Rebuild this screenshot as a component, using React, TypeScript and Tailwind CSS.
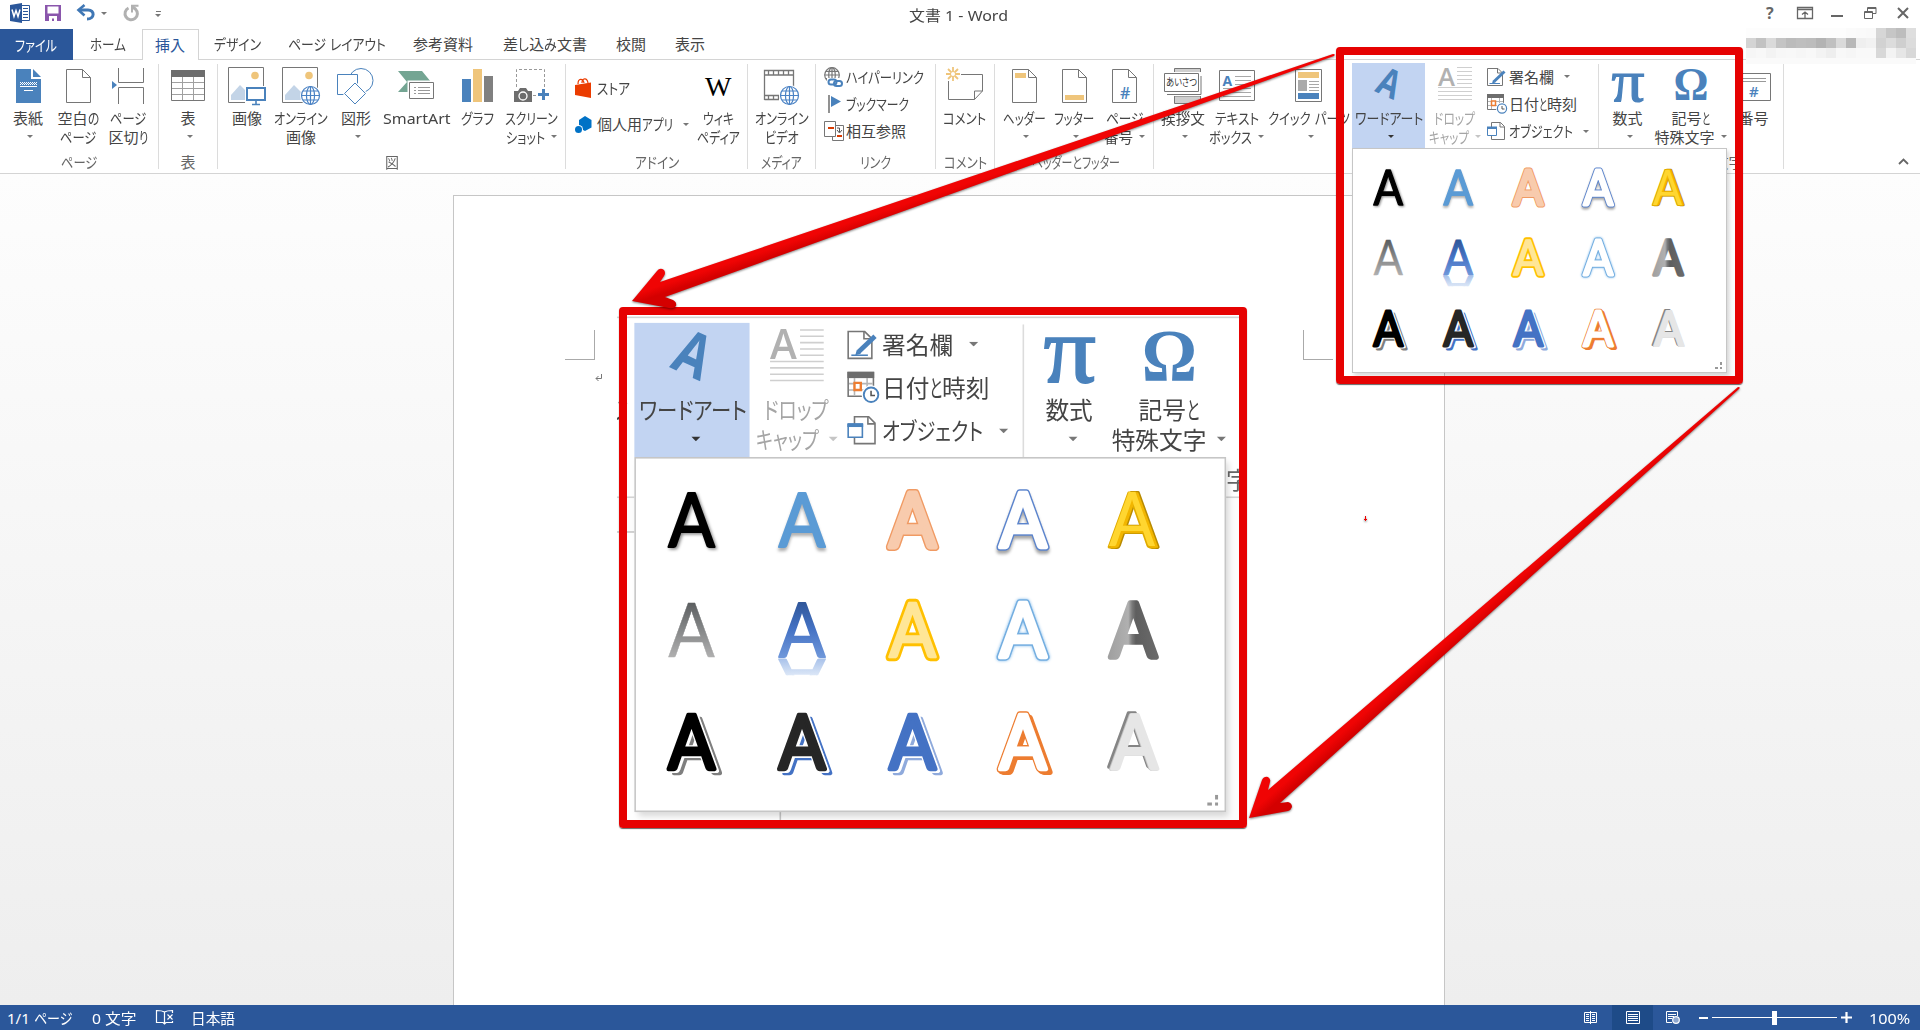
import React, { useLayoutEffect, useRef, ReactNode } from "react";

/* Text fitted to a given width: kana runs are condensed, kanji keep their width. */
function Fit({ t, w, className = "" }: { t: string; w: number; className?: string }) {
  const ref = useRef<HTMLSpanElement>(null);
  const runs = t.match(/[\u3041-\u30ff]+|[^\u3041-\u30ff]+/g) || [];
  useLayoutEffect(() => {
    const outer = Array.from(ref.current!.children) as HTMLElement[];
    outer.forEach((o) => (o.style.width = "auto"));
    const ws = outer.map((o) => (o.firstElementChild as HTMLElement).offsetWidth);
    const kana = runs.map((r) => /[\u3041-\u30ff]/.test(r));
    const k = ws.reduce((a, v, i) => a + (kana[i] ? v : 0), 0);
    const o = ws.reduce((a, v, i) => a + (kana[i] ? 0 : v), 0);
    const ks = k ? (w - o) / k : 1;
    const os = k ? 1 : w / o;
    outer.forEach((e, i) => {
      const s = kana[i] ? ks : os;
      e.style.width = ws[i] * s + "px";
      (e.firstElementChild as HTMLElement).style.transform = `scaleX(${s})`;
    });
  });
  return (
    <span ref={ref} className={"inline-flex shrink-0 whitespace-pre " + className}>
      {runs.map((r, i) => (
        <span key={i} className="inline-block">
          <span className="inline-block origin-left">{r}</span>
        </span>
      ))}
    </span>
  );
}

const Caret = ({ className = "text-[#777]" }: { className?: string }) => (
  <svg width="6" height="3" className={"shrink-0 " + className}>
    <path d="M0 0H6L3 3Z" fill="currentColor" />
  </svg>
);

type Line = [string, number];

function Big({ icon, lines, arrow, cls }: { icon: ReactNode; lines: Line[]; arrow?: boolean | string; cls: string }) {
  const color = typeof arrow === "string" ? arrow : "text-[#777]";
  return (
    <div className={"mt-[3px] flex h-[85px] shrink-0 flex-col items-center " + cls}>
      <div className="flex h-[46px] items-center justify-center pb-px">{icon}</div>
      <div className="flex h-[18px] items-center justify-center">
        <Fit t={lines[0][0]} w={lines[0][1]} />
      </div>
      <div className={"flex h-[19px] items-center justify-center gap-[6px] " + (lines[1] ? "" : "pl-[4px]")}>
        {lines[1] && <Fit t={lines[1][0]} w={lines[1][1]} />}
        {arrow && <Caret className={color} />}
      </div>
    </div>
  );
}

function Group({ cls, label, children }: { cls: string; label?: Line; children: ReactNode }) {
  return (
    <div className={"flex h-full shrink-0 flex-col " + cls}>
      <div className="flex h-[92px]">{children}</div>
      <div className="flex h-[20px] items-center justify-center text-[#666]">
        {label && <Fit t={label[0]} w={label[1]} />}
      </div>
    </div>
  );
}

const Sep = () => <div className="mt-1 h-[105px] w-px shrink-0 bg-[#dcdcdc]" />;

const BLUE = "#4a82bc";
const GRAY = "#767676";

const Svg = ({ w, h, children }: { w: number; h: number; children: ReactNode }) => (
  <svg width={w} height={h} viewBox={`0 0 ${w} ${h}`} fill="none" className="shrink-0 overflow-visible">
    {children}
  </svg>
);

const Globe = ({ x, y, r = 9, c = "#4a82c4" }: { x: number; y: number; r?: number; c?: string }) => (
  <g stroke={c} strokeWidth="1.2">
    <circle cx={x} cy={y} r={r} fill="#fff" />
    <ellipse cx={x} cy={y} rx={r * 0.45} ry={r} />
    <path d={`M${x - r} ${y}H${x + r}M${x} ${y - r}V${y + r}M${x - r * 0.86} ${y - r / 2}H${x + r * 0.86}M${x - r * 0.86} ${y + r / 2}H${x + r * 0.86}`} />
  </g>
);

const CoverIcon = () => (
  <Svg w={25} h={34}>
    <path d="M0 0H15V10H25V34H0Z" fill={BLUE} />
    <path d="M17 0L25 8H17Z" fill={BLUE} />
    <path d="M4 13.5H21M5 14.500H21M4 15.5H21" stroke="#fff" strokeDasharray="1 1" />
    <path d="M4 17.5H21M8 21.5H17" stroke="#fff" strokeWidth="1" />
  </Svg>
);
const Page = ({ children }: { children?: ReactNode }) => (
  <Svg w={25} h={34}>
    <path d="M.5 .5H16.5L24.5 8.5V33.5H.5Z" fill="#fff" stroke={GRAY} />
    <path d="M16.5 .5V8.5H24.5" stroke={GRAY} />
    {children}
  </Svg>
);
const BreakIcon = () => (
  <Svg w={33} h={36}>
    <path d="M6.5 0V14.5H31.5V0M6.5 36V19.5H31.5V36" stroke={GRAY} />
    <path d="M0 13L5 17L0 21Z" fill={BLUE} />
  </Svg>
);
const TableIcon = () => (
  <Svg w={34} h={31}>
    <path d="M.5 .5H33.5V30.5H.5Z" stroke={GRAY} fill="#fff" />
    <path d="M0 0H34V7H0Z" fill="#6d6d6d" />
    <path d="M1 12.5H33M1 18.5H33M1 24.5H33M11.5 7V30M22.5 7V30" stroke="#a0a0a0" />
  </Svg>
);
const PicBase = () => (
  <>
    <path d="M.5 .5H35.5V35.5H.5Z" stroke={GRAY} fill="#fff" />
    <circle cx="27" cy="8.500" r="3.800" fill="#efc57b" />
    <path d="M3 33V28L12 18L19 25V33Z" fill="#c3d4e7" />
  </>
);
const PictureIcon = () => (
  <Svg w={38} h={38}>
    <PicBase />
    <path d="M17 19H39V36H17Z" fill="#fff" />
    <path d="M19 21H37V33H19Z" stroke={BLUE} strokeWidth="2" fill="#fff" />
    <path d="M28 34V37M24 37.500H32" stroke={BLUE} strokeWidth="1.600" />
  </Svg>
);
const OnlinePicIcon = () => (
  <Svg w={38} h={38}>
    <PicBase />
    <circle cx="28.500" cy="28.500" r="10.500" fill="#fff" />
    <Globe x={28.5} y={28.5} />
  </Svg>
);
const ShapesIcon = () => (
  <Svg w={38} h={36}>
    <circle cx="24" cy="12.500" r="12" stroke={BLUE} />
    <path d="M.5 6.500H20.500V26.500H.5Z" fill="#fff" stroke={BLUE} />
    <path d="M18 15L28.500 25.500L18 36L7.500 25.500Z" fill="#fff" stroke="#fff" strokeWidth="3" />
    <path d="M18 15L28.500 25.500L18 36L7.500 25.500Z" fill="#fff" stroke={BLUE} />
  </Svg>
);
const SmartArtIcon = () => (
  <Svg w={36} h={29}>
    <path d="M0 0H24L33 11L27 21H0L9 11Z" fill="#74a593" />
    <path d="M9.500 9.500H37V29H9.500Z" fill="#fff" />
    <path d="M11.500 11.500H35.500V27.500H11.500Z" fill="#fff" stroke={GRAY} />
    <path d="M16 16.500H18M16 19.500H18M16 22.500H18M20 16.500H32M20 19.500H32M20 22.500H32" stroke="#999" />
  </Svg>
);
const ChartIcon = () => (
  <Svg w={31} h={33}>
    <path d="M0 10H9V33H0Z" fill={BLUE} />
    <path d="M11 0H20V33H11Z" fill="#efc57b" />
    <path d="M22 7H31V33H22Z" fill="#808080" />
  </Svg>
);
const ShotIcon = () => (
  <Svg w={36} h={34}>
    <path d="M3.500 18V.5H31.500V22M20 26.500H26" stroke="#999" strokeDasharray="3 2" />
    <path d="M1 22H5L7 19H13L15 22H19V33H1Z" fill="#6d6d6d" />
    <circle cx="10" cy="27" r="4" stroke="#fff" strokeWidth="1.300" />
    <path d="M30.500 20V31M25 25.500H36" stroke={BLUE} strokeWidth="3" />
  </Svg>
);
const StoreIcon = () => (
  <Svg w={17} h={20}>
    <path d="M3 6C3 0 8 0 9 5M7 5C7 0 12-1 13 5" stroke="#eb3c00" strokeWidth="1.200" />
    <path d="M0 7L16 4.500V20L0 17Z" fill="#eb3c00" />
  </Svg>
);
const AppsIcon = () => (
  <Svg w={17} h={17}>
    <path d="M10 0L16.500 4V11.500L10 15L4 12V4Z" fill="#0072c6" />
    <circle cx="3.500" cy="13.500" r="4.500" fill="#fff" />
    <circle cx="3.500" cy="13.500" r="3.500" fill="#0072c6" />
  </Svg>
);
const FilmIcon = () => (
  <Svg w={36} h={36}>
    <path d="M.5 30V.5H29.500V17M29.500 5H.5M4.500 1V5M9.500 1V5M14.500 1V5M19.500 1V5M24.500 1V5M.5 29.500H15M.5 25.500H15M4.500 26V29M9.500 26V29M14.500 26V29" stroke={GRAY} strokeWidth="1.300" transform="translate(0 2)" />
    <circle cx="25.500" cy="27.500" r="10.500" fill="#fff" />
    <Globe x={25.5} y={27.5} />
  </Svg>
);
const LinkIcon = () => (
  <Svg w={19} h={20}>
    <Globe x={8} y={8} r={7.3} c="#777" />
    <path d="M3 11H20V21H3Z" fill="#fff" />
    <rect x="4.500" y="12.500" width="8" height="5" rx="2.500" stroke={BLUE} strokeWidth="2" />
    <rect x="10" y="14" width="8" height="5" rx="2.500" stroke={BLUE} strokeWidth="2" />
  </Svg>
);
const FlagIcon = () => (
  <Svg w={19} h={18}>
    <path d="M5 0V18" stroke={GRAY} strokeWidth="1.600" />
    <path d="M7 1L17 6.500L7 12Z" fill={BLUE} />
  </Svg>
);
const XrefIcon = () => (
  <Svg w={20} h={20}>
    <path d="M8.500 4.500H19.500V19.500H8.500Z" fill="#fff" stroke={GRAY} />
    <path d="M.5 .5H11.500V15.500H.5Z" fill="#fff" stroke={GRAY} />
    <path d="M4 7H10M13 15H18" stroke="#d83b01" strokeWidth="2" />
    <path d="M13 7H15.500V11M13 9L15.500 12L18 9" stroke="#555" />
  </Svg>
);
const CommentIcon = () => (
  <Svg w={37} h={33}>
    <path d="M15 7.500H36.500V24L28.500 32.500H2.500V14M36.500 24H28.500V32.500" stroke={GRAY} />
    <path d="M7 0V14M0 7H14M2 2L12 12M12 2L2 12" stroke="#efc57b" strokeWidth="1.800" />
    <circle cx="7" cy="7" r="2" fill="#fff" />
  </Svg>
);
const GreetIcon = () => (
  <Svg w={37} h={36}>
    <path d="M10.500 .5H36.500V10H10.500ZM10.500 28H36.500V35.500H10.500Z" fill="#cfcfcf" stroke={GRAY} />
    <path d="M0 4H38V28H0Z" fill="#fff" />
    <path d="M.5 5.500H34.500V23.500H.5Z" fill="#fff" stroke={GRAY} />
    <path d="M3 26.500H37V8" stroke={GRAY} />
    <text x="17.500" y="18" fontSize="10.500" fill="#333" textAnchor="middle" textLength="31" lengthAdjust="spacingAndGlyphs">あいさつ</text>
  </Svg>
);
const TextBoxIcon = () => (
  <Svg w={36} h={31}>
    <path d="M.5 .5H35.500V30.500H.5Z" fill="#fff" stroke={GRAY} />
    <text x="3.500" y="16" fontSize="14" fontWeight="700" fill={BLUE} fontFamily="Open Sans">A</text>
    <path d="M16 6.500H32M16 10.500H32M16 14.500H32M4 18.500H32M4 22.500H32M4 26.500H32" stroke="#a8a8a8" />
  </Svg>
);
const QuickIcon = () => (
  <Svg w={27} h={33}>
    <path d="M.5 .5H26.500V32.500H.5Z" fill="#fff" stroke={GRAY} />
    <path d="M3 3H24V9H3Z" fill="#efc57b" />
    <path d="M3 11H12V22H3Z" fill="#aaa" />
    <path d="M14 12.500H24M14 15.500H24M14 18.500H24M14 21.500H24" stroke="#a8a8a8" />
    <path d="M3 24H24V30H3Z" fill={BLUE} />
  </Svg>
);
const WordArtIcon = () => (
  <Svg w={28} h={32}>
    <text transform="matrix(1.020 .47 -.56 1.270 -1 21)" fontSize="28" fontWeight="700" fill={BLUE} fontFamily="Open Sans">A</text>
  </Svg>
);
const DropCapIcon = () => (
  <Svg w={34} h={38}>
    <text x="0" y="19" fontSize="26" fontWeight="600" fill="#b1b1b1" fontFamily="Open Sans" textLength="17" lengthAdjust="spacingAndGlyphs">A</text>
    <path d="M19 .5H34M19 4.500H34M19 8.500H34M19 12.500H34M19 16.500H34M0 20.500H34M0 24.500H34M0 28.500H34M0 32.500H34" stroke="#cfcfcf" />
  </Svg>
);
const SignIcon = () => (
  <Svg w={19} h={18}>
    <path d="M.5 .5H11L15.500 5V17.500H.5Z" fill="#fff" stroke={GRAY} />
    <path d="M10.500 .5V5H15" stroke={GRAY} />
    <path d="M2.500 15.500H13" stroke={BLUE} />
    <path d="M7 13.500L17.500 3.500" stroke={BLUE} strokeWidth="3" />
    <path d="M5 15.500L6 12L8.500 14.500Z" fill={BLUE} />
  </Svg>
);
const DateIcon = () => (
  <Svg w={20} h={20}>
    <path d="M.5 .5H16.500V15.500H.5Z" fill="#fff" stroke={GRAY} />
    <path d="M0 0H17V4H0Z" fill="#6d6d6d" />
    <path d="M1 7.500H16M1 11.500H16M4.500 4V15M12.500 4V15" stroke="#b5b5b5" />
    <path d="M4.500 7H8.500V11.500H4.500Z" stroke="#ed7d31" strokeWidth="1.500" fill="#fff" />
    <circle cx="15" cy="14.500" r="6" fill="#fff" />
    <circle cx="15" cy="14.500" r="4.600" stroke={BLUE} strokeWidth="1.200" />
    <path d="M15 12V15H17.500" stroke="#555" />
  </Svg>
);
const ObjectIcon = () => (
  <Svg w={19} h={18}>
    <path d="M4.500 .5H13.500L17.500 4.500V17.500H4.500Z" fill="#fff" stroke={GRAY} />
    <path d="M13 .5V5H17.500" stroke={GRAY} />
    <path d="M.5 5.500H9.500V13.500H.5Z" fill="#fff" stroke={BLUE} />
    <path d="M0 4.500H10V7H0Z" fill={BLUE} />
  </Svg>
);
const PiIcon = () => (
  <Svg w={30} h={36}>
    <text x="-1.500" y="32.500" fontSize="60" fontWeight="400" stroke={BLUE} strokeWidth="1.200" fill={BLUE} fontFamily="Liberation Serif" textLength="33" lengthAdjust="spacingAndGlyphs">π</text>
  </Svg>
);
const OmegaIcon = () => (
  <Svg w={32} h={36}>
    <text x="-1.500" y="32" fontSize="47" fontWeight="700" fill={BLUE} fontFamily="Liberation Serif" textLength="35" lengthAdjust="spacingAndGlyphs">Ω</text>
  </Svg>
);
const NumberIcon = () => (
  <Svg w={34} h={28}>
    <path d="M.5 .5H33.500V27.500H.5Z" fill="#fff" stroke={GRAY} />
    <path d="M4 5.500H29M4 8.500H29" stroke="#999" />
    <text x="12" y="24" fontSize="15" fill={BLUE} fontFamily="Open Sans" fontWeight="600">#</text>
  </Svg>
);

function Row({ icon, t, w, arrow, cls = "" }: { icon: ReactNode; t: string; w: number; arrow?: string; cls?: string }) {
  return (
    <div className={"flex items-center " + cls}>
      <div className="flex w-[22px] shrink-0 items-center">{icon}</div>
      <Fit t={t} w={w} />
      {arrow && (
        <div className={arrow}>
          <Caret />
        </div>
      )}
    </div>
  );
}

const TextTools = () => (
  <>
    <Big cls="w-[73px] bg-[#c2d4f2]" icon={<WordArtIcon />} lines={[["ワードアート", 68]]} arrow="text-[#333]" />
    <Big cls="w-[59px] text-[#a5a5a5]" icon={<DropCapIcon />} lines={[["ドロップ", 41], ["キャップ", 40]]} arrow="text-[#c5c5c5]" />
    <div className="flex w-[114px] shrink-0 flex-col pt-[3px] pl-[3px]">
      <Row cls="h-[27px]" icon={<SignIcon />} t="署名欄" w={45} arrow="pl-[10px]" />
      <Row cls="h-[28px]" icon={<DateIcon />} t="日付と時刻" w={68} />
      <Row cls="h-[26px]" icon={<ObjectIcon />} t="オブジェクト" w={64} arrow="pl-[10px]" />
    </div>
  </>
);
const SymbolTools = () => (
  <>
    <Big cls="w-[57px]" icon={<PiIcon />} lines={[["数式", 30]]} arrow />
    <Big cls="w-[69px]" icon={<OmegaIcon />} lines={[["記号と", 38], ["特殊文字", 60]]} arrow />
  </>
);

/* One layer of a gallery letter: dx, dy, fill, stroke width, stroke colour. */
type Layer = [number, number, string, number, string?];
const ARTS: { layers: Layer[]; fx?: string; reflect?: boolean }[] = [
  { fx: "drop-shadow-[1px_1px_1px_rgba(0,0,0,0.45)]", layers: [[0, 0, "#000", 1.4]] },
  { fx: "drop-shadow-[0px_2px_1px_rgba(0,0,0,0.3)]", layers: [[0, 0, "#5b9bd5", 1.4]] },
  { layers: [[0, 0, "#f09a63", 5], [0, 0, "#f8cbad", 3.1]] },
  { fx: "drop-shadow-[0px_2px_1px_rgba(0,0,0,0.35)]", layers: [[0, 0, "#5b84cd", 4.8], [0, 0, "#fff", 2.9]] },
  { layers: [[0.8, 0.3, "#b88a00", 2.4], [-0.9, -0.2, "#e0ab00", 1.8], [0.5, 0, "#f2b600", 1], [-0.8, -0.3, "#ffd630", 0]] },
  { layers: [[0, 0, "url(#waGray)", 0.3, "url(#waGray)"]] },
  { reflect: true, layers: [[0, 0, "url(#waBlue)", 1.2, "url(#waBlue)"]] },
  { layers: [[0, 0, "#ffc000", 5.4], [0, 0, "#ffe697", 1.7]] },
  { fx: "drop-shadow-[0px_0px_1px_#7db8ea]", layers: [[0, 0, "#74aee0", 4.8], [0, 0, "#fff", 2.8]] },
  { layers: [[0, 0, "url(#waSteel)", 3.4, "url(#waSteel)"]] },
  { layers: [[3.4, 3, "#7f7f7f", 2.8], [1.8, 1.4, "#fff", 2.4], [0, 0, "#fff", 4.4], [0, 0, "#000", 2.8]] },
  { layers: [[3.4, 3, "#4472c4", 2.8], [1.8, 1.4, "#fff", 2.4], [0, 0, "#fff", 4.4], [0, 0, "#262626", 2.8]] },
  { layers: [[3.4, 3, "#8faadc", 2.8], [1.8, 1.4, "#fff", 2.4], [0, 0, "#fff", 4.4], [0, 0, "#4472c4", 2.8]] },
  { layers: [[2.4, 2.4, "#ed7d31", 3.8], [1.2, 1.2, "#ed7d31", 4.2], [0, 0, "#ed7d31", 4.6], [0, 0, "#fff", 2.9]] },
  { layers: [[-1, -1, "#858585", 2.2], [0.2, 0, "#c2c2c2", 2.2], [0.8, 0.4, "#e6e6e6", 2.2]] },
];

const Letter = ({ l, y = 53, fill }: { l: Layer; y?: number; fill?: string }) => (
  <text
    x={20.500 + l[0]}
    y={y + l[1]}
    fontFamily="Lato"
    fontSize="48"
    textLength="29.500"
    lengthAdjust="spacingAndGlyphs"
    fill={fill || l[2]}
    stroke={fill || l[4] || l[2]}
    strokeWidth={l[3]}
    strokeLinejoin="round"
  >
    A
  </text>
);

function Gallery() {
  return (
    <div className="relative h-[225px] w-[375px] border border-[#c6c6c6] bg-white pt-[3px] shadow-[2px_3px_4px_rgba(0,0,0,0.15)]">
      <div className="grid w-[350px] grid-cols-5">
        {ARTS.map((a, i) => (
          <svg key={i} width="70" height="70" viewBox="0 0 70 70" className={"overflow-visible " + (a.fx || "")}>
            <defs>
              <linearGradient id="waGray" gradientUnits="userSpaceOnUse" x1="0" y1="17" x2="0" y2="53">
                <stop offset="0" stopColor="#595c5e" />
                <stop offset="1" stopColor="#b0b0b0" />
              </linearGradient>
              <linearGradient id="waBlue" gradientUnits="userSpaceOnUse" x1="0" y1="17" x2="0" y2="53">
                <stop offset="0" stopColor="#2f5597" />
                <stop offset="0.500" stopColor="#4472c4" />
                <stop offset="1" stopColor="#6f97da" />
              </linearGradient>
              <linearGradient id="waFade" gradientUnits="userSpaceOnUse" x1="0" y1="53" x2="0" y2="38">
                <stop offset="0" stopColor="#a9c2ea" />
                <stop offset="1" stopColor="#e0eaf8" />
              </linearGradient>
              <linearGradient id="waSteel" gradientUnits="userSpaceOnUse" x1="20" y1="35" x2="50" y2="35">
                <stop offset="0" stopColor="#a0a0a0" />
                <stop offset="0.400" stopColor="#b0b0b0" />
                <stop offset="0.480" stopColor="#7a7a7a" />
                <stop offset="0.560" stopColor="#5e5e5e" />
                <stop offset="1" stopColor="#6a6a6a" />
              </linearGradient>
              <clipPath id="waClip">
                <rect x="0" y="39" width="70" height="14.500" />
              </clipPath>
            </defs>
            {a.reflect && (
              <g transform="translate(0 93.600) scale(1 -.75)" clipPath="url(#waClip)">
                <Letter l={a.layers[0]} fill="url(#waFade)" />
              </g>
            )}
            {a.layers.map((l, j) => (
              <Letter key={j} l={l} y={i > 9 ? 53.5 : 53} />
            ))}
          </svg>
        ))}
      </div>
      <svg width="7" height="7" className="absolute right-[4px] bottom-[3px]">
        <path d="M5 0H7V3H5ZM0 5H3V7H0ZM5 5H7V7H5Z" fill="#999" />
      </svg>
    </div>
  );
}

function TitleBar() {
  return (
    <div className="flex h-[29px] shrink-0 items-center text-[#444]">
      <div className="flex w-[909px] items-center pb-[3px] pl-[10px]">
        <Svg w={20} h={20}>
          <path d="M8 2.500H19.500V17.500H8Z" fill="#fff" stroke="#2b579a" />
          <path d="M13 5.500H18M13 8.500H18M13 11.500H18M13 14.500H18" stroke="#2b579a" />
          <path d="M0 2L12 0V20L0 18Z" fill="#2b579a" />
          <path d="M2 6.500L4 13.500L6 7.500L8 13.500L10 6.500" stroke="#fff" strokeWidth="1.500" />
        </Svg>
        <div className="pl-[15px]">
          <Svg w={16} h={16}>
            <path d="M0 0H16V16H0Z" fill="#8a56ac" />
            <path d="M2.500 1.500H13.500V8.500H2.500ZM4 11H12V16H9V13.500H7V16H4Z" fill="#fff" />
          </Svg>
        </div>
        <div className="pl-[16px]">
          <Svg w={18} h={16}>
            <path d="M3 5H11C18 5 18 14 10 14" stroke="#3f77b5" strokeWidth="3" />
            <path d="M7.500 0L1.500 5L7.500 10.500" stroke="#3f77b5" strokeWidth="2.600" />
          </Svg>
        </div>
        <div className="pl-[6px]"><Caret /></div>
        <div className="pl-[16px]">
          <Svg w={16} h={16}>
            <path d="M5.500 3A6.200 6.200 0 1 0 12.600 4.200L9.500 1.800" stroke="#b1b1b1" strokeWidth="3" />
            <path d="M15.500 .8H9V7.500" stroke="#b1b1b1" strokeWidth="2" />
          </Svg>
        </div>
        <div className="flex flex-col items-center gap-[2px] pt-[2px] pl-[16px]">
          <div className="h-px w-[5px] bg-[#777]" />
          <Caret />
        </div>
      </div>
      <div className="w-[855px]"><Fit t="文書 1 - Word" w={99} /></div>
      <div className="flex h-full items-center pb-[3px] text-[#666]">
        <div className="w-[33px] pl-[2px] text-[16px] font-bold">?</div>
        <div className="w-[34px]">
          <Svg w={16} h={12}>
            <path d="M.5 .5H15.500V11.500H.5ZM0 2.500H16M8 11V5M5 7.500L8 5L11 7.500" stroke="#666" strokeWidth="1.300" />
          </Svg>
        </div>
        <div className="w-[33px] pt-[6px]"><div className="h-[2px] w-[12px] bg-[#666]" /></div>
        <div className="w-[33px]">
          <Svg w={13} h={12}>
            <path d="M3.500 4V.5H12V6.500H9M3.500 1.500H12M.5 4.500H8.500V11.500H.5ZM.5 5.500H8.500" stroke="#666" />
          </Svg>
        </div>
        <Svg w={12} h={12}>
          <path d="M1 1L11 11M11 1L1 11" stroke="#666" strokeWidth="2" />
        </Svg>
      </div>
    </div>
  );
}

const TABS: { t: string; w: number; cls: string }[] = [
  { t: "デザイン", w: 47, cls: "w-[74px] pl-[15px]" },
  { t: "ページ レイアウト", w: 97, cls: "w-[125px] pl-[15px]" },
  { t: "参考資料", w: 60, cls: "w-[90px] pl-[15px]" },
  { t: "差し込み文書", w: 84, cls: "w-[113px] pl-[15px]" },
  { t: "校閲", w: 30, cls: "w-[59px] pl-[15px]" },
  { t: "表示", w: 30, cls: "w-[60px] pl-[15px]" },
];

const MOSAIC: string[][] = [
  ["#fdfdfd", "#fdfdfd", "#fdfdfd", "#fdfdfd", "#fdfdfd", "#fdfdfd", "#fdfdfd", "#fdfdfd", "#fdfdfd", "#fdfdfd", "#fbfbfb", "#fafafa", "#f9f9f9", "#d6d6d6", "#c6c6c6", "#bdbdbd", "#dedede"],
  ["#d4d4d4", "#c2c2c2", "#dadada", "#c4c4c4", "#bbbbbb", "#bebebe", "#bcbcbc", "#b3b3b3", "#c0c0c0", "#dadada", "#b8b8b8", "#efefef", "#f2f2f2", "#d2d2d2", "#dcdcdc", "#cfcfcf", "#dcdcdc"],
  ["#f6f6f6", "#f8f8f8", "#f3f3f3", "#f7f7f7", "#f8f8f8", "#f6f6f6", "#f8f8f8", "#f3f3f3", "#eeeeee", "#f8f8f8", "#f6f6f6", "#f9f9f9", "#f9f9f9", "#d8d8d8", "#f3f3f3", "#e6e6e6", "#d8d8d8"],
];

function TabBar() {
  return (
    <div className="flex h-[31px] shrink-0 text-[#444]">
      <div className="flex w-[73px] items-center bg-[#2b579a] pl-[15px] text-white"><Fit t="ファイル" w={42} /></div>
      <div className="flex w-[69px] items-center border-b border-[#d4d4d4] pl-[17px]"><Fit t="ホーム" w={36} /></div>
      <div className="flex w-[57px] items-center border-x border-t border-[#d4d4d4] pl-3 text-[#2b579a]"><Fit t="挿入" w={30} /></div>
      <div className="flex flex-1 border-b border-[#d4d4d4]">
        {TABS.map((t) => (
          <div key={t.t} className={"flex items-center " + t.cls}><Fit t={t.t} w={t.w} /></div>
        ))}
      </div>
    </div>
  );
}

function Ribbon() {
  return (
    <div className="relative z-10 flex h-[114px] shrink-0 border-b border-[#d4d4d4] bg-white">
      <Group cls="w-[158px]" label={["ページ", 36]}>
        <div className="flex pl-[3px]">
          <Big cls="w-[50px]" icon={<CoverIcon />} lines={[["表紙", 30]]} arrow />
          <Big cls="w-[50px]" icon={<Page />} lines={[["空白の", 41], ["ページ", 36]]} />
          <Big cls="w-[50px]" icon={<BreakIcon />} lines={[["ページ", 36], ["区切り", 39]]} />
        </div>
      </Group>
      <Sep />
      <Group cls="w-[58px]" label={["表", 15]}>
        <Big cls="w-[58px]" icon={<TableIcon />} lines={[["表", 15]]} arrow />
      </Group>
      <Sep />
      <Group cls="w-[347px]" label={["図", 14]}>
        <div className="flex pl-[2px]">
          <Big cls="w-[54px]" icon={<PictureIcon />} lines={[["画像", 30]]} />
          <Big cls="w-[54px]" icon={<OnlinePicIcon />} lines={[["オンライン", 54], ["画像", 30]]} />
          <Big cls="w-[56px]" icon={<ShapesIcon />} lines={[["図形", 30]]} arrow />
          <Big cls="w-[64px]" icon={<SmartArtIcon />} lines={[["SmartArt", 67]]} />
          <Big cls="w-[59px]" icon={<ChartIcon />} lines={[["グラフ", 33]]} />
          <Big cls="w-[48px]" icon={<ShotIcon />} lines={[["スクリーン", 53], ["ショット", 39]]} arrow />
        </div>
      </Group>
      <Sep />
      <Group cls="w-[181px]" label={["アドイン", 44]}>
        <div className="flex w-[125px] shrink-0 flex-col pt-[10px] pl-[9px]">
          <Row cls="h-[36px]" icon={<StoreIcon />} t="ストア" w={33} />
          <Row cls="h-[36px]" icon={<AppsIcon />} t="個人用アプリ" w={76} arrow="pl-[10px]" />
        </div>
        <Big
          cls="w-[54px]"
          icon={
            <Svg w={28} h={20}>
              <text x="1" y="19.500" fontFamily="Liberation Serif" fontSize="28" fill="#000">W</text>
            </Svg>
          }
          lines={[["ウィキ", 31], ["ペディア", 43]]}
        />
      </Group>
      <Sep />
      <Group cls="w-[67px]" label={["メディア", 41]}>
        <Big cls="w-[67px]" icon={<FilmIcon />} lines={[["オンライン", 54], ["ビデオ", 34]]} />
      </Group>
      <Sep />
      <Group cls="w-[119px]" label={["リンク", 31]}>
        <div className="flex flex-col pt-[3px] pl-2">
          <Row cls="h-[27px]" icon={<LinkIcon />} t="ハイパーリンク" w={78} />
          <Row cls="h-[27px]" icon={<FlagIcon />} t="ブックマーク" w={63} />
          <Row cls="h-[27px]" icon={<XrefIcon />} t="相互参照" w={60} />
        </div>
      </Group>
      <Sep />
      <Group cls="w-[58px]" label={["コメント", 43]}>
        <Big cls="w-[57px]" icon={<div className="pb-[4px]"><CommentIcon /></div>} lines={[["コメント", 43]]} />
      </Group>
      <Sep />
      <Group cls="w-[158px] pl-[3px]" label={["ヘッダーとフッター", 88]}>
        <Big cls="w-[52px]" icon={<Page><path d="M3 4H14V9H3Z" fill="#efc57b" /></Page>} lines={[["ヘッダー", 43]]} arrow />
        <Big cls="w-[48px]" icon={<Page><path d="M3 26H22V31H3Z" fill="#efc57b" /></Page>} lines={[["フッター", 40]]} arrow />
        <Big
          cls="w-[52px]"
          icon={<Page><text x="8" y="30" fontSize="16" fontWeight="600" fill={BLUE} fontFamily="Open Sans">#</text></Page>}
          lines={[["ページ", 37], ["番号", 29]]}
          arrow
        />
      </Group>
      <Sep />
      <Group cls="w-[444px]">
        <Big cls="w-[57px]" icon={<GreetIcon />} lines={[["挨拶文", 44]]} arrow />
        <Big cls="w-[51px]" icon={<TextBoxIcon />} lines={[["テキスト", 44], ["ボックス", 43]]} arrow />
        <Big cls="w-[90px] pl-[3px]" icon={<QuickIcon />} lines={[["クイック パーツ", 81]]} arrow />
        <TextTools />
      </Group>
      <Sep />
      <Group cls="w-[184px]" label={["記号と特殊文字", 105]}>
        <SymbolTools />
        <Big cls="w-[57px]" icon={<div className="pt-[3px]"><NumberIcon /></div>} lines={[["番号", 30]]} />
      </Group>
      <Sep />
      <div className="flex flex-1 items-end justify-end pr-[11px] pb-[8px]">
        <Svg w={11} h={7}>
          <path d="M1 6L5.500 1.500L10 6" stroke="#666" strokeWidth="1.800" />
        </Svg>
      </div>
      <div className="absolute top-[88px] left-[1352px]"><Gallery /></div>
    </div>
  );
}

function StatusBar() {
  return (
    <div className="flex h-[25px] shrink-0 items-center bg-[#2b579a] text-white">
      <div className="w-[84px] pl-[7px]"><Fit t="1/1 ページ" w={65} /></div>
      <div className="w-[72px] pl-2"><Fit t="0 文字" w={44} /></div>
      <div className="w-[35px]">
        <Svg w={18} h={15}>
          <path d="M8.500 2C6 .5 3 .5 .5 .5V12.500H7L8.500 14L10 12.500H16.500V11M8.500 2V13M8.500 2C11 .5 14 .5 16.500 .5V3M11.500 4.500L16.500 9.500M16.500 4.500L11.500 9.500" stroke="#fff" strokeWidth="1.200" />
        </Svg>
      </div>
      <div className="flex-1"><Fit t="日本語" w={44} /></div>
      <div className="w-[28px]">
        <Svg w={13} h={13}>
          <path d="M6.500 1.500H.5V11.500H6.500M6.500 1.500H12.500V11.500H6.500M6.500 0V13M2 3.500H5M2 5.500H5M2 7.500H5M2 9.500H5M8 3.500H11M8 5.500H11M8 7.500H11M8 9.500H11" stroke="#fff" />
        </Svg>
      </div>
      <div className="flex h-full w-[41px] items-center justify-center bg-[#1e4b88]">
        <Svg w={14} h={13}>
          <path d="M.5 .5H13.500V12.500H.5ZM2 3.500H12M2 5.500H12M2 7.500H12M2 9.500H12" stroke="#fff" />
        </Svg>
      </div>
      <div className="w-[46px] pl-[13px]">
        <Svg w={14} h={13}>
          <path d="M6 11.500H.5V.5H11.500V5M2 3.500H10M2 5.500H8M2 7.500H6" stroke="#fff" />
          <circle cx="10" cy="9" r="3.300" stroke="#fff" strokeWidth="1.200" fill="#8fa8d0" />
        </Svg>
      </div>
      <div className="h-[2px] w-[9px] bg-white" />
      <div className="ml-1 flex w-[125px] items-center justify-center">
        <div className="h-px w-[60px] bg-white" />
        <div className="h-[14px] w-[5px] bg-white" />
        <div className="h-px w-[60px] bg-white" />
      </div>
      <div className="w-[32px] pl-1">
        <Svg w={11} h={11}><path d="M5.500 0V11M0 5.500H11" stroke="#fff" strokeWidth="2.200" /></Svg>
      </div>
      <div className="w-[51px]"><Fit t="100%" w={41} /></div>
    </div>
  );
}

/* The ribbon section around WordArt, enlarged. */
function Magnified() {
  return (
    <div className="absolute top-[315px] left-[617px] h-[505px] w-[623px] overflow-hidden bg-white">
      <div className="relative h-[320px] w-[395px] origin-top-left scale-[1.578]">
        <div className="absolute top-[1px] left-0 h-px w-full bg-[#d4d4d4]" />
        <div className="absolute top-[115px] left-0 h-[205px] w-full border-t border-[#d4d4d4] bg-[#fcfcfc]" />
        <div className="absolute top-[137px] left-0 h-[183px] w-[104px] border-t border-r border-[#c6c6c6] bg-white" />
        <div className="absolute top-[42px] -left-[3px] flex h-[36px] items-center"><Fit t="ツ" w={10} /></div>
        <div className="absolute top-[95px] left-[386px] text-[#666]">字</div>
        <div className="absolute top-[2px] left-[11px] flex h-[92px]">
          <TextTools />
          <Sep />
          <SymbolTools />
        </div>
        <div className="absolute top-[90px] left-[11px]"><Gallery /></div>
      </div>
    </div>
  );
}

export default function App() {
  return (
    <div className="relative flex h-[1030px] w-[1920px] flex-col overflow-hidden bg-white font-['Noto_Sans','Noto_Sans_CJK_JP',sans-serif] text-[15px] leading-[18px] text-[#444] [font-feature-settings:'palt']">
      <TitleBar />
      <TabBar />
      <Ribbon />
      <div className="flex min-h-0 flex-1 justify-start bg-linear-to-b from-[#fdfdfd] to-[#eeeeee] pt-[21px] pl-[453px]">
        <div className="relative w-[992px] border-x border-t border-[#c6c6c6] bg-white">
          <div className="absolute top-[134px] left-[111px] h-[30px] w-[30px] border-r border-b border-[#aaa]" />
          <div className="absolute top-[134px] left-[849px] h-[30px] w-[30px] border-b border-l border-[#aaa]" />
          <div className="absolute top-[178px] left-[141px]">
            <Svg w={7} h={7}><path d="M6.500 0V4.500H1M3.500 2L1 4.500L3.500 7" stroke="#777" /></Svg>
          </div>
        </div>
      </div>
      <StatusBar />

      <div className="absolute top-[28px] left-[1746px] z-20 grid w-[170px] grid-cols-17">
        {MOSAIC.flat().map((c, i) => (
          <div key={i} className="h-[10px]" style={{ backgroundColor: c }} />
        ))}
        <div className="col-span-17 h-[6px] bg-[#fafafa]" />
      </div>

      <Magnified />
      <div className="absolute top-[307px] left-[619px] h-[521px] w-[628px] rounded-[4px] border-8 border-[#e60202] shadow-[0_1px_1px_rgba(0,0,0,0.6)]" />
      <div className="absolute top-[47px] left-[1336px] z-20 h-[337px] w-[407px] rounded-[4px] border-8 border-[#e60202] shadow-[0_1px_1px_rgba(0,0,0,0.6)]" />
      <svg width="1920" height="1030" className="pointer-events-none absolute inset-0 z-20 drop-shadow-[0_1px_1px_rgba(0,0,0,0.5)]">
        <defs>
          <linearGradient id="arrowA" gradientUnits="userSpaceOnUse" x1="815" y1="228" x2="821" y2="246">
            <stop offset="0.300" stopColor="#f00404" />
            <stop offset="0.750" stopColor="#d40000" />
          </linearGradient>
          <linearGradient id="arrowB" gradientUnits="userSpaceOnUse" x1="1351" y1="716" x2="1365" y2="732">
            <stop offset="0.300" stopColor="#f00404" />
            <stop offset="0.750" stopColor="#d40000" />
          </linearGradient>
        </defs>
        <path d="M632 301L657 271Q660 267 664 270Q666 273 664 276L660 282L1333 54Q1336 54 1334 56L665 297L673 300Q677 302 676 306Q674 309 669 308Z" fill="url(#arrowA)" />
        <path d="M1249 818L1262 780Q1264 776 1268 777Q1271 779 1270 782L1268 790L1738 387Q1741 387 1739 389L1280 803L1288 802Q1292 803 1292 807Q1291 810 1288 811Z" fill="url(#arrowB)" />
        <path d="M1365.500 516V521M1364 519.500H1367" stroke="#e00" />
      </svg>
    </div>
  );
}
